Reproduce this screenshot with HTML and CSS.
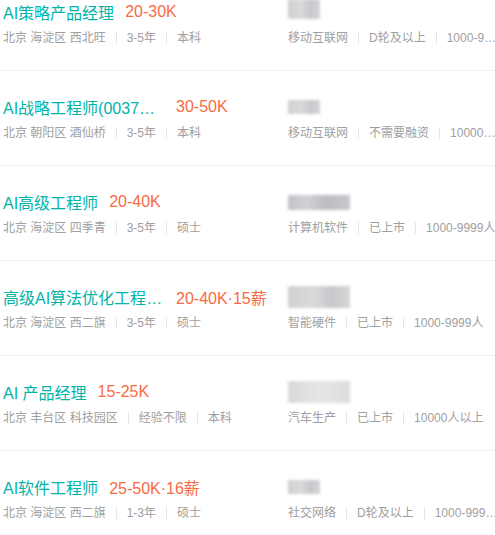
FILE: index.html
```html
<!DOCTYPE html>
<html lang="zh-CN">
<head>
  <meta charset="UTF-8" />
  <title>职位列表</title>
  <link rel="stylesheet" href="styles.css">
</head>
<body>
  <ul class="job-list">
    <li class="job-item">
      <div class="job-primary">
        <div class="job-head">
          <span class="job-name">AI策略产品经理</span>
          <span class="salary">20-30K</span>
        </div>
        <p class="meta">北京 海淀区 西北旺<em class="sep"></em>3-5年<em class="sep"></em>本科</p>
      </div>
      <div class="company">
        <div class="company-name"><span class="blur small tall"></span></div>
        <p class="meta">移动互联网<em class="sep"></em>D轮及以上<em class="sep"></em>1000-9999人</p>
      </div>
    </li>

    <li class="job-item">
      <div class="job-primary">
        <div class="job-head">
          <span class="job-name">AI战略工程师(0037北京)</span>
          <span class="salary">30-50K</span>
        </div>
        <p class="meta">北京 朝阳区 酒仙桥<em class="sep"></em>3-5年<em class="sep"></em>本科</p>
      </div>
      <div class="company">
        <div class="company-name"><span class="blur small"></span></div>
        <p class="meta">移动互联网<em class="sep"></em>不需要融资<em class="sep"></em>10000人以上</p>
      </div>
    </li>

    <li class="job-item">
      <div class="job-primary">
        <div class="job-head">
          <span class="job-name">AI高级工程师</span>
          <span class="salary">20-40K</span>
        </div>
        <p class="meta">北京 海淀区 四季青<em class="sep"></em>3-5年<em class="sep"></em>硕士</p>
      </div>
      <div class="company">
        <div class="company-name"><span class="blur wide dark"></span></div>
        <p class="meta">计算机软件<em class="sep"></em>已上市<em class="sep"></em>1000-9999人</p>
      </div>
    </li>

    <li class="job-item">
      <div class="job-primary">
        <div class="job-head">
          <span class="job-name">高级AI算法优化工程师（北京）</span>
          <span class="salary">20-40K·15薪</span>
        </div>
        <p class="meta">北京 海淀区 西二旗<em class="sep"></em>3-5年<em class="sep"></em>硕士</p>
      </div>
      <div class="company">
        <div class="company-name"><span class="blur wide big"></span></div>
        <p class="meta">智能硬件<em class="sep"></em>已上市<em class="sep"></em>1000-9999人</p>
      </div>
    </li>

    <li class="job-item">
      <div class="job-primary">
        <div class="job-head">
          <span class="job-name">AI 产品经理</span>
          <span class="salary">15-25K</span>
        </div>
        <p class="meta">北京 丰台区 科技园区<em class="sep"></em>经验不限<em class="sep"></em>本科</p>
      </div>
      <div class="company">
        <div class="company-name"><span class="blur wide big light"></span></div>
        <p class="meta">汽车生产<em class="sep"></em>已上市<em class="sep"></em>10000人以上</p>
      </div>
    </li>

    <li class="job-item">
      <div class="job-primary">
        <div class="job-head">
          <span class="job-name">AI软件工程师</span>
          <span class="salary">25-50K·16薪</span>
        </div>
        <p class="meta">北京 海淀区 西二旗<em class="sep"></em>1-3年<em class="sep"></em>硕士</p>
      </div>
      <div class="company">
        <div class="company-name"><span class="blur small"></span></div>
        <p class="meta">社交网络<em class="sep"></em>D轮及以上<em class="sep"></em>1000-9999人</p>
      </div>
    </li>
  </ul>
</body>
</html>
```

FILE: styles.css
```css
:root {
  --teal: #00b4aa;
  --salary: #fa6a43;
  --meta: #a0a0a0;
  --line: #f0f0f0;
  --sep: #e6e6e6;
}

body {
  margin: 0;
  background: #ffffff;
  font-family: "Liberation Sans", "Noto Sans CJK SC", sans-serif;
  overflow: hidden;
}

*, *::before, *::after {
  box-sizing: border-box;
}

.job-list {
  list-style: none;
  margin: 0;
  padding: 0;
}

.job-item {
  display: grid;
  grid-template-columns: 285px 1fr;
  padding: 24px 0 22px 3px;
  border-bottom: 1px solid var(--line);
}

.job-item:first-child {
  padding-top: 0;
}

.job-head {
  display: flex;
  align-items: center;
  height: 24px;
  font-size: 16px;
}

.job-name {
  color: var(--teal);
  max-width: 162px;
  white-space: nowrap;
  overflow: hidden;
  text-overflow: ellipsis;
  margin-right: 11px;
}

.salary {
  color: var(--salary);
  white-space: nowrap;
}

.meta {
  margin: 4px 0 0;
  height: 20px;
  line-height: 20px;
  font-size: 12px;
  color: var(--meta);
  white-space: nowrap;
  overflow: hidden;
  text-overflow: ellipsis;
}

.sep {
  display: inline-block;
  width: 1px;
  height: 12px;
  margin: 0 10px;
  background: var(--sep);
  vertical-align: -2px;
}

.company {
  min-width: 0;
}

.company .meta {
  margin-right: -3px;
}

.company-name {
  height: 24px;
  display: flex;
  align-items: center;
}

/* company names are blurred out */
.blur {
  display: block;
  width: 32px;
  height: 14px;
  background: linear-gradient(to right, #cfcfd2, #dadadc 40%, #c8c8cc 70%, #d6d6d8);
  filter: blur(1.5px);
}

.blur.tall {
  height: 20px;
  margin-top: -6px;
}

.blur.wide {
  width: 62px;
  height: 15px;
}

.blur.big {
  height: 22px;
}

.blur.dark {
  background: linear-gradient(to right, #c2c2c8, #d0d0d6 30%, #bdbdc4 60%, #c6c6cc);
}

.blur.light {
  background: linear-gradient(to right, #d8d8da, #e6e6e8 50%, #dcdcde);
}
```
